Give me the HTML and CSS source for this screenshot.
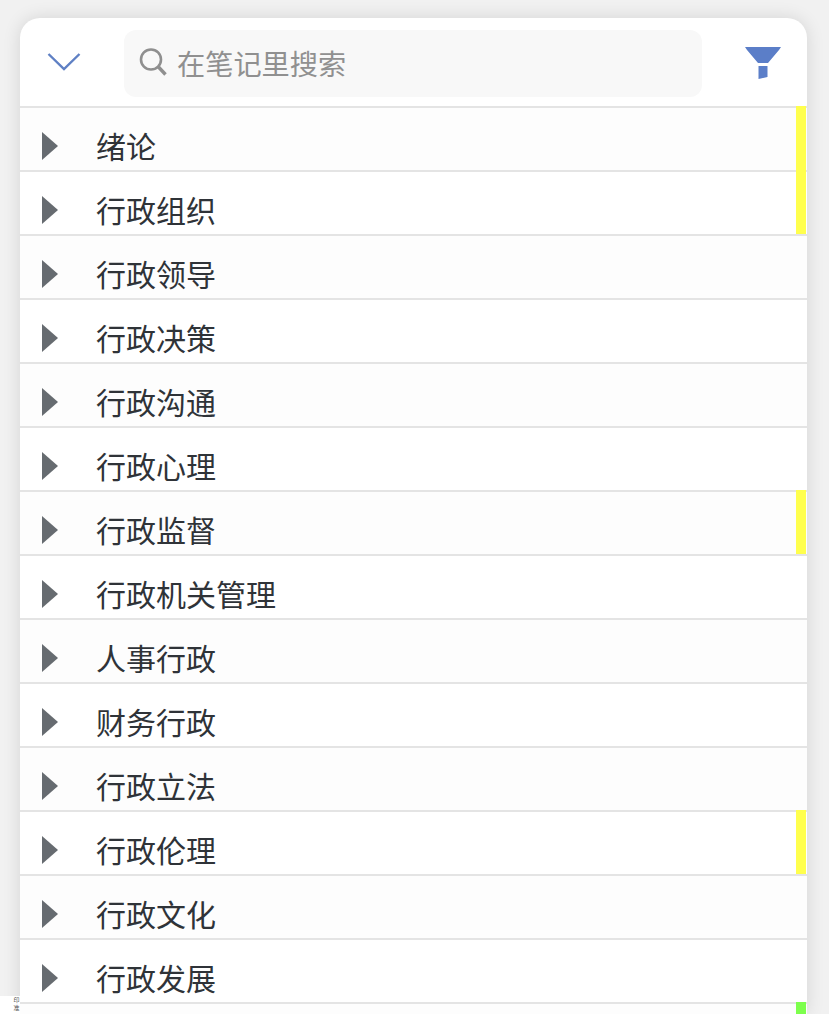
FILE: index.html
```html
<!DOCTYPE html>
<html lang="zh">
<head>
<meta charset="utf-8">
<title>笔记</title>
<link rel="stylesheet" href="styles.css">
</head>
<body>
<div class="corner"><span>印</span><span>准</span></div>
<main class="card">
  <header class="top">
    <svg class="chev" width="34" height="20" viewBox="0 0 34 20"><path d="M1.5 2 L17 17 L32.5 2" fill="none" stroke="#5f80c4" stroke-width="2.4"/></svg>
    <div class="search">
      <svg class="glass" width="30" height="32" viewBox="0 0 30 32"><circle cx="13" cy="13.5" r="10" fill="none" stroke="#8f8f8f" stroke-width="2.6"/><path d="M20.5 21 L27.5 28.5" stroke="#8f8f8f" stroke-width="3.4" fill="none"/></svg>
      <span class="ph">在笔记里搜索</span>
    </div>
    <svg class="funnel" width="36" height="34" viewBox="0 0 36 34"><path d="M0 0 H36 L34 3 L23 16 H13 L2 3 Z M13.500 19 H22.500 V30 L13.500 32 Z" fill="#5b7ec8"/></svg>
  </header>
  <ul class="list">
    <li class="row odd mark-y"><i class="tri"></i><span>绪论</span></li>
    <li class="row mark-y"><i class="tri"></i><span>行政组织</span></li>
    <li class="row odd"><i class="tri"></i><span>行政领导</span></li>
    <li class="row"><i class="tri"></i><span>行政决策</span></li>
    <li class="row odd"><i class="tri"></i><span>行政沟通</span></li>
    <li class="row"><i class="tri"></i><span>行政心理</span></li>
    <li class="row odd mark-y"><i class="tri"></i><span>行政监督</span></li>
    <li class="row"><i class="tri"></i><span>行政机关管理</span></li>
    <li class="row odd"><i class="tri"></i><span>人事行政</span></li>
    <li class="row"><i class="tri"></i><span>财务行政</span></li>
    <li class="row odd"><i class="tri"></i><span>行政立法</span></li>
    <li class="row mark-y"><i class="tri"></i><span>行政伦理</span></li>
    <li class="row odd"><i class="tri"></i><span>行政文化</span></li>
    <li class="row"><i class="tri"></i><span>行政发展</span></li>
    <li class="row odd mark-g"></li>
  </ul>
</main>
</body>
</html>
```
FILE: styles.css
```css
* { box-sizing: border-box; }
html, body { margin: 0; height: 1014px; overflow: hidden; }
body {
  background: #f1f1f1;
  font-family: "Noto Sans CJK SC", "Noto Sans", sans-serif;
  padding: 18px 22px 0 20px;
  position: relative;
}
.corner {
  position: absolute;
  left: 0;
  bottom: 0;
  width: 20px;
  height: 18px;
  background: #fff;
  display: flex;
  flex-direction: column;
  align-items: center;
  padding-left: 13px;
  font-size: 6px;
  line-height: 8px;
  color: #555;
}
.card {
  background: #fff;
  border-radius: 20px 20px 0 0;
  box-shadow: 0 0 18px rgba(0,0,0,.12);
  height: 996px;
  overflow: hidden;
}
.top {
  height: 88px;
  display: flex;
  align-items: center;
  padding: 0 26px 0 27px;
}
.chev { flex: none; margin-right: 43px; }
.search {
  width: 578px;
  height: 67px;
  margin-top: 2px;
  background: #f8f8f8;
  border-radius: 12px;
  display: flex;
  align-items: center;
  padding-left: 14px;
}
.glass { flex: none; margin-right: 9px; margin-top: -2px; }
.ph { font-size: 28.2px; line-height: 32px; color: #909090; }
.funnel { flex: none; margin-left: auto; margin-top: 4px; }
.list { list-style: none; margin: 0; padding: 0; }
.row {
  position: relative;
  height: 64px;
  border-top: 2px solid #e4e4e4;
  background: #fff;
  display: flex;
  align-items: center;
  padding: 12px 0 0 22px;
  font-size: 30px;
  color: #2f3338;
}
.odd { background: #fdfdfd; }
.tri {
  flex: none;
  width: 0;
  height: 0;
  margin-top: 2px;
  margin-right: 38px;
  border-left: 16px solid #666b70;
  border-top: 14px solid transparent;
  border-bottom: 14px solid transparent;
}
.mark-y::after, .mark-g::after {
  content: "";
  position: absolute;
  top: -2px;
  right: 1px;
  bottom: 0;
  width: 10px;
  background: #ffff4d;
}
.mark-g::after { background: #7dff4d; }
```
